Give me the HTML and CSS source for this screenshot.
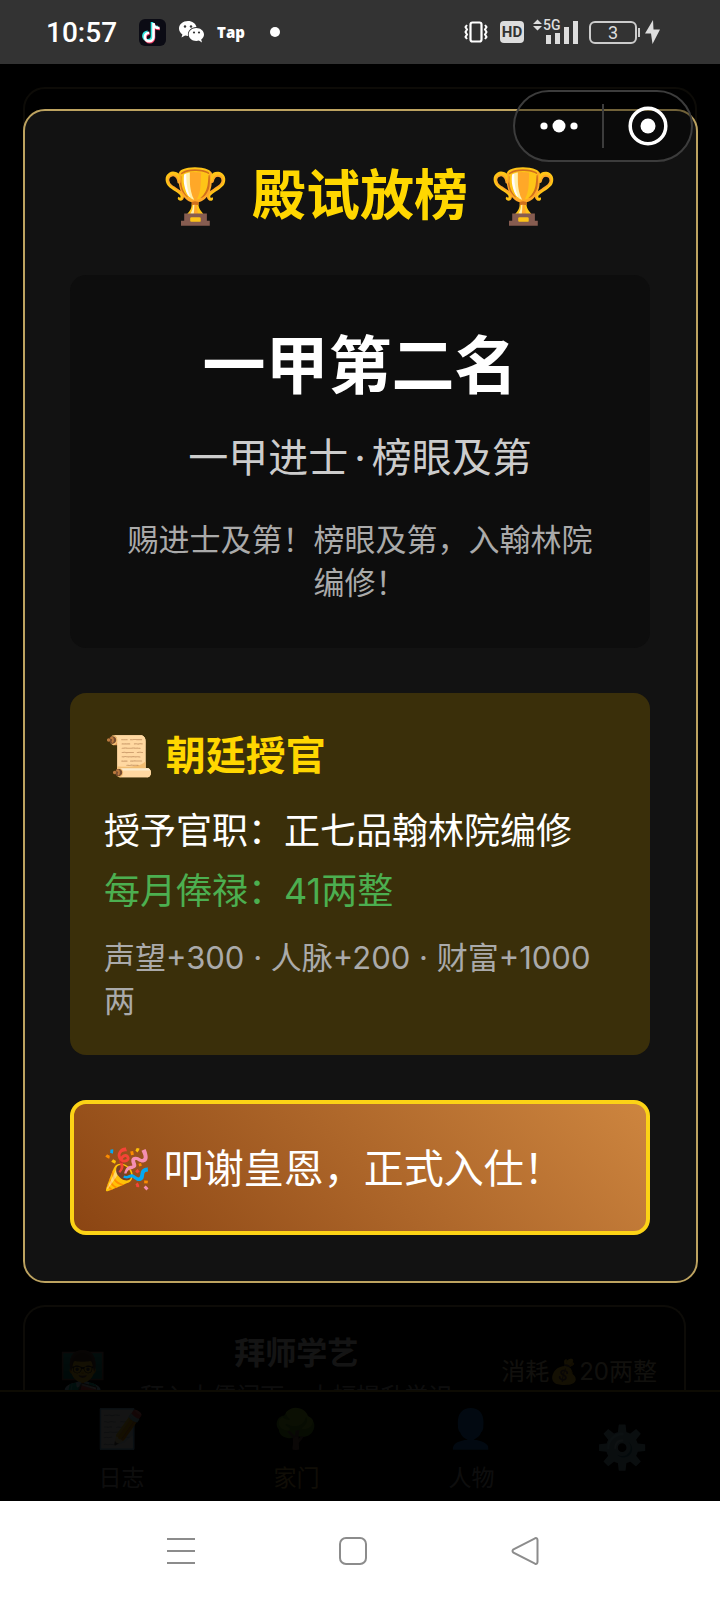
FILE: index.html
```html
<!DOCTYPE html>
<html lang="zh-CN">
<head>
    <meta charset="UTF-8">
    <meta name="viewport" content="width=device-width, initial-scale=1.0">
    <title>殿试放榜</title>
    <link rel="stylesheet" href="styles.css">
</head>
<body>
    <header class="status-bar">
        <span class="clock">10:57</span>
        <svg class="app-douyin" width="27" height="27" viewBox="0 0 27 27">
            <rect width="27" height="27" rx="6" fill="#0b0b14"/>
            <g fill="none" stroke-width="2.6">
                <path d="M14 4v14a4.300 4.300 0 1 1-4.300-4.300M14 4c0 4 2 5 6 5" stroke="#35e6e0" transform="translate(-1 -1)"/>
                <path d="M15 4v14a4.300 4.300 0 1 1-4.300-4.300M15 4c0 4 2 5 6 5" stroke="#f2355f" transform="translate(0 1)"/>
                <path d="M14.500 4v14a4.300 4.300 0 1 1-4.300-4.300M14.500 4c0 4 2 5 6 5" stroke="#fff"/>
            </g>
        </svg>
        <svg class="app-wechat" width="26" height="22" viewBox="0 0 26 22">
            <path d="M9 0C4 0 0 3.300 0 7.500c0 2.400 1.300 4.500 3.400 5.900L2.500 16.500l3.600-1.900c1 .3 2 .4 3 .4C8 10 12 6 17.500 6 16.700 2.500 13.200 0 9 0z" fill="#fff"/>
            <path d="M17.300 7c-4.200 0-7.600 2.900-7.600 6.500s3.400 6.500 7.600 6.500c.9 0 1.800-.1 2.600-.4L23 21.500l-.8-3c1.700-1.200 2.800-3 2.800-5C25 9.900 21.500 7 17.300 7z" fill="#fff"/>
            <g fill="#333">
                <circle cx="6" cy="5.500" r="1.200"/>
                <circle cx="12" cy="5.500" r="1.200"/>
                <circle cx="15" cy="11.500" r="1.100"/>
                <circle cx="20" cy="11.500" r="1.100"/>
            </g>
        </svg>
        <span class="tap">Tap</span>
        <span class="more-dot"></span>

        <div class="status-right">
            <svg width="24" height="22" viewBox="0 0 24 22" fill="none" stroke="#fff">
                <rect x="6.500" y="1.500" width="11" height="19" rx="2" stroke-width="2.200"/>
                <path d="M3 4l-1.500 2L3 8.500 1.500 11 3 13.500 1.500 16 3 18M21 4l1.500 2L21 8.500l1.500 2.500-1.500 2.500 1.500 2.500-1.500 2" stroke-width="2"/>
            </svg>
            <span class="hd">HD</span>
            <span class="signal">
                <svg width="46" height="26" viewBox="0 0 46 26" fill="#ddd">
                    <path d="M0 5l4.500-4.500L9 5zM0 7l4.500 4.500L9 7z"/>
                    <rect x="13" y="16" width="5" height="9"/>
                    <rect x="22" y="14" width="5" height="11"/>
                    <rect x="31" y="8" width="5" height="17"/>
                    <rect x="40" y="2" width="5" height="23"/>
                </svg>
                <span class="network">5G</span>
            </span>
            <span class="battery">3</span>
            <svg width="15" height="24" viewBox="0 0 15 24"><path d="M8 0L0 13.500h6L7.500 24 15 9.500H8.500z" fill="#ddd"/></svg>
        </div>
    </header>

    <div class="scene">
        <div class="page">
            <div class="cards">
                <section class="card card-main"></section>
                <section class="card card-teacher">
                    <span class="avatar">👨‍🏫</span>
                    <div class="card-body">
                        <h2>拜师学艺</h2>
                        <p>拜入大儒门下，大幅提升学识</p>
                    </div>
                    <span class="cost">消耗💰20两整</span>
                </section>
            </div>
            <nav class="tabs">
                <a href="#log"><span class="tab-icon">📝</span>日志</a>
                <a href="#home" class="active"><span class="tab-icon">🌳</span>家门</a>
                <a href="#people"><span class="tab-icon">👤</span>人物</a>
                <a href="#settings" class="settings"><span class="gear">⚙️</span></a>
            </nav>
        </div>

        <div class="overlay">
            <main class="modal">
                <h1><span class="trophy">🏆</span>殿试放榜<span class="trophy">🏆</span></h1>

                <section class="result">
                    <h2>一甲第二名</h2>
                    <p class="degree">一甲进士<span class="dot">·</span>榜眼及第</p>
                    <p class="decree">赐进士及第！榜眼及第，入翰林院编修！</p>
                </section>

                <section class="office">
                    <h3><span class="emoji">📜</span>朝廷授官</h3>
                    <p>授予官职：正七品翰林院编修</p>
                    <p class="salary">每月俸禄：41两整</p>
                    <p class="bonus">声望+300 · 人脉+200 · 财富+1000两</p>
                </section>

                <button class="accept" type="button"><span class="emoji">🎉</span>叩谢皇恩，正式入仕！</button>
            </main>
        </div>

        <div class="capsule">
            <button type="button" aria-label="更多">
                <svg width="38" height="14" viewBox="0 0 38 14" fill="#fff">
                    <circle cx="4" cy="7" r="3.600"/>
                    <circle cx="19" cy="7" r="6.500"/>
                    <circle cx="34" cy="7" r="3.600"/>
                </svg>
            </button>
            <button type="button" aria-label="关闭">
                <svg width="40" height="40" viewBox="0 0 40 40">
                    <circle cx="20" cy="20" r="17.800" fill="none" stroke="#fff" stroke-width="3.500"/>
                    <circle cx="20" cy="20" r="7.500" fill="#fff"/>
                </svg>
            </button>
        </div>
    </div>

    <footer class="system-nav">
        <button type="button" aria-label="菜单">
            <svg width="28" height="28" viewBox="0 0 28 28"><path d="M0 2h28M0 14h28M0 26h28"/></svg>
        </button>
        <button type="button" aria-label="主页">
            <svg width="28" height="28" viewBox="0 0 28 28"><rect x="1" y="1" width="26" height="26" rx="6"/></svg>
        </button>
        <button type="button" aria-label="返回">
            <svg width="28" height="28" viewBox="0 0 28 28"><path d="M2.500 12.300L24 1.300q2.300-.8 2.500 1.700v22q-.2 2.500-2.500 1.700L2.500 15.700q-2-1.700 0-3.400z"/></svg>
        </button>
    </footer>
</body>
</html>
```

FILE: styles.css
```css
* {
    box-sizing: border-box;
}

body {
    margin: 0;
    min-height: 100vh;
    display: flex;
    flex-direction: column;
    background: #000;
    color: #fff;
    font-family: Inter, "Noto Sans CJK SC", "Noto Color Emoji", sans-serif;
}

h1, h2, h3, p {
    margin: 0;
    font-weight: 400;
}

button {
    font-family: inherit;
    background: none;
    border: none;
    padding: 0;
    cursor: pointer;
}

svg {
    display: block;
}

/* status bar */
.status-bar {
    display: flex;
    align-items: center;
    height: 64px;
    padding: 0 60px 0 46px;
    background: #333;
    font-family: Roboto, sans-serif;
}

.clock {
    font-size: 28px;
    font-weight: 500;
}

.app-douyin {
    margin-left: 22px;
}

.app-wechat {
    margin-left: 13px;
}

.tap {
    margin-left: 12px;
    font-family: "Open Sans", sans-serif;
    font-size: 15px;
    font-weight: 800;
}

.more-dot {
    width: 10px;
    height: 10px;
    margin-left: 25px;
    border-radius: 50%;
    background: #fff;
}

.status-right {
    display: flex;
    align-items: center;
    margin-left: auto;
}

.hd {
    width: 24px;
    height: 22px;
    margin-left: 12px;
    border-radius: 4px;
    background: #ddd;
    color: #333;
    font-size: 15px;
    font-weight: 700;
    line-height: 22px;
    text-align: center;
}

.signal {
    position: relative;
    margin-left: 9px;
}

.network {
    position: absolute;
    top: -1px;
    left: 10px;
    color: #ddd;
    font-size: 14px;
    font-weight: 500;
    line-height: 14px;
}

.battery {
    position: relative;
    width: 48px;
    height: 23px;
    margin: 0 8px 0 10px;
    border: 2px solid #ccc;
    border-radius: 6px;
    color: #ddd;
    font-size: 18px;
    line-height: 20px;
    text-align: center;
}

.battery::after {
    content: "";
    position: absolute;
    top: 5px;
    right: -5px;
    width: 2px;
    height: 9px;
    background: #ccc;
}

/* game page, dimmed below the overlay */
.scene {
    position: relative;
    flex: 1;
    display: grid;
}

.page, .overlay {
    grid-area: 1 / 1;
}

.page {
    display: flex;
    flex-direction: column;
}

.cards {
    flex: 1;
    display: flex;
    flex-direction: column;
    gap: 22px;
    padding: 23px 23px 0;
}

.card {
    border: 2px solid #a09060;
    border-radius: 22px;
}

.card-main {
    flex: 1;
}

.card-teacher {
    display: flex;
    align-items: flex-start;
    height: 85px;
    margin-right: 11px;
    padding: 23px 27px 0 34px;
    border-bottom: none;
    border-radius: 22px 22px 0 0;
    overflow: hidden;
}

.avatar {
    width: 46px;
    margin-top: 17px;
    font-size: 38px;
    line-height: 46px;
}

.card-body {
    flex: 1;
    padding-right: 14px;
    text-align: center;
}

.card-body h2 {
    font-size: 31px;
    font-weight: 700;
    line-height: 46px;
}

.card-body p {
    margin-top: 3px;
    color: #aaa;
    font-size: 24px;
    line-height: 36px;
}

.cost {
    margin-top: 24px;
    color: #d8c8a0;
    font-size: 24px;
    line-height: 36px;
}

.tabs {
    display: flex;
    height: 111px;
    padding: 0 34px;
    border-top: 2px solid #a08a30;
    background: #000;
}

.tabs a {
    display: flex;
    flex-direction: column;
    align-items: center;
    flex: 175;
    gap: 8px;
    padding-top: 11px;
    color: #aaa;
    font-size: 23px;
    line-height: 34px;
    text-decoration: none;
}

.tabs .active {
    color: #c8a850;
}

.tabs .settings {
    flex: 127;
    justify-content: center;
    padding: 0;
}

.tab-icon {
    font-size: 38px;
    line-height: 50px;
    color: #24548a;
}

.gear {
    font-size: 42px;
    line-height: 56px;
}

.overlay {
    padding: 45px 22px 218px 23px;
    background: rgba(0, 0, 0, 0.92);
}

/* result dialog */
.modal {
    display: flex;
    flex-direction: column;
    gap: 45px;
    padding: 45px 46px 46px 45px;
    border: 2px solid #bda360;
    border-radius: 22px;
    background: #121212;
}

.modal h1 {
    display: flex;
    justify-content: center;
    gap: 22px;
    margin-bottom: -6px;
    color: #ffd700;
    font-size: 54px;
    font-weight: 700;
    line-height: 80px;
}

.result {
    padding: 46px 45px 44px;
    border-radius: 16px;
    background: #0d0d0d;
    text-align: center;
}

.result h2 {
    font-size: 63px;
    font-weight: 700;
    line-height: 88px;
}

.degree {
    margin-top: 22px;
    color: #ccc;
    font-size: 40px;
    line-height: 54px;
}

.dot {
    padding: 0 6px;
}

.decree {
    margin-top: 33px;
    color: #aaa;
    font-size: 31px;
    line-height: 43px;
}

.office {
    padding: 35px 34px 33px;
    border-radius: 16px;
    background: #3a2f0a;
    font-size: 36px;
    line-height: 60px;
}

.office h3 {
    display: flex;
    gap: 12px;
    margin-bottom: 17px;
    color: #ffd700;
    font-size: 40px;
    font-weight: 700;
    line-height: 56px;
}

.salary {
    color: #4caf50;
}

.office .bonus {
    margin-top: 15px;
    color: #aaa;
    font-size: 31px;
    line-height: 43px;
}

.accept {
    display: flex;
    align-items: center;
    gap: 12px;
    height: 135px;
    padding: 2px 28px 0;
    border: 4px solid #fcd316;
    border-radius: 16px;
    background: linear-gradient(45deg, #8b4513, #cd853f);
    color: #fff;
    font-size: 40px;
    line-height: 56px;
}

/* mini program capsule */
.capsule {
    position: absolute;
    top: 26px;
    right: 27px;
    display: flex;
    align-items: center;
    width: 180px;
    height: 72px;
    border: 2px solid #3c3c3c;
    border-radius: 36px;
    background: rgba(0, 0, 0, 0.4);
}

.capsule button {
    display: flex;
    align-items: center;
    justify-content: center;
    flex: 1;
    height: 44px;
}

.capsule button + button {
    border-left: 2px solid #3c3c3c;
}

/* system navigation */
.system-nav {
    display: flex;
    align-items: center;
    justify-content: center;
    gap: 144px;
    height: 99px;
    padding-right: 14px;
    background: #fff;
}

.system-nav svg {
    fill: none;
    stroke: #8c8c8c;
    stroke-width: 2;
}
```
